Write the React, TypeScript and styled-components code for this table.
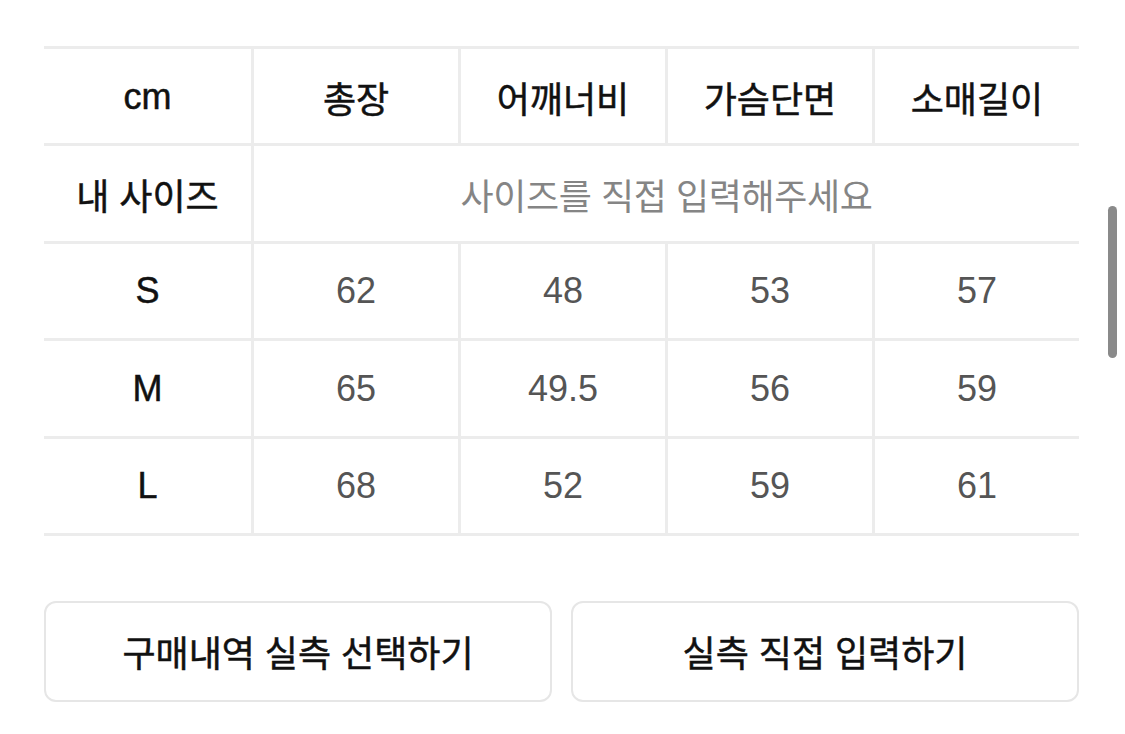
import React from "react";
import styled, { createGlobalStyle } from "styled-components";

const Global = createGlobalStyle`
  html, body { margin: 0; padding: 0; background: #ffffff; }
  body { font-family: "Liberation Sans", "Noto Sans CJK KR", sans-serif; }
`;

const Page = styled.div`
  position: relative;
  width: 1125px;
  height: 734px;
  box-sizing: border-box;
  padding: 46px 46px 0 44px;
  background: #fff;
`;

const Table = styled.div`
  display: grid;
  grid-template-columns: repeat(5, 1fr);
  border-top: 3px solid #ececec;
`;

const Cell = styled.div<{ $first?: boolean; $span?: number; $kind?: "head" | "label" | "value" | "hint" }>`
  grid-column: span ${(p) => p.$span ?? 1};
  height: 97.4px;
  box-sizing: border-box;
  display: flex;
  align-items: center;
  justify-content: center;
  border-bottom: 3px solid #ececec;
  border-left: ${(p) => (p.$first ? "none" : "3px solid #ececec")};
  font-size: 36px;
  color: ${(p) => (p.$kind === "value" ? "#555555" : p.$kind === "hint" ? "#858585" : "#111111")};
  font-weight: 400;
  letter-spacing: ${(p) => (p.$kind === "hint" ? "-0.4px" : "0")};
  -webkit-text-stroke: ${(p) => (p.$kind === "head" || p.$kind === "label" ? "0.5px #111" : "0")};
  padding-top: 1px;
`;

const Buttons = styled.div`
  display: grid;
  grid-template-columns: 1fr 1fr;
  gap: 19px;
  margin-top: 65px;
`;

const Button = styled.button`
  height: 101px;
  border: 2px solid #e6e6e6;
  border-radius: 12px;
  background: #fff;
  font-family: "Liberation Sans", "Noto Sans CJK KR", sans-serif;
  font-size: 36px;
  font-weight: 400;
  -webkit-text-stroke: 0.5px #111;
  color: #111;
  padding: 0;
`;

const Scrollbar = styled.div`
  position: absolute;
  left: 1108px;
  top: 206px;
  width: 9px;
  height: 152px;
  border-radius: 5px;
  background: #8a8a8a;
`;

const heads = ["총장", "어깨너비", "가슴단면", "소매길이"];
const rows: [string, string[]][] = [
  ["S", ["62", "48", "53", "57"]],
  ["M", ["65", "49.5", "56", "59"]],
  ["L", ["68", "52", "59", "61"]],
];

export default function App() {
  return (
    <>
      <Global />
      <Page>
        <Table>
          <Cell $first $kind="head">cm</Cell>
          {heads.map((h) => (
            <Cell key={h} $kind="head">{h}</Cell>
          ))}
          <Cell $first $kind="label">내 사이즈</Cell>
          <Cell $span={4} $kind="hint">사이즈를 직접 입력해주세요</Cell>
          {rows.map(([size, vals]) => (
            <React.Fragment key={size}>
              <Cell $first $kind="label">{size}</Cell>
              {vals.map((v, i) => (
                <Cell key={i} $kind="value">{v}</Cell>
              ))}
            </React.Fragment>
          ))}
        </Table>
        <Buttons>
          <Button>구매내역 실측 선택하기</Button>
          <Button>실측 직접 입력하기</Button>
        </Buttons>
        <Scrollbar />
      </Page>
    </>
  );
}
